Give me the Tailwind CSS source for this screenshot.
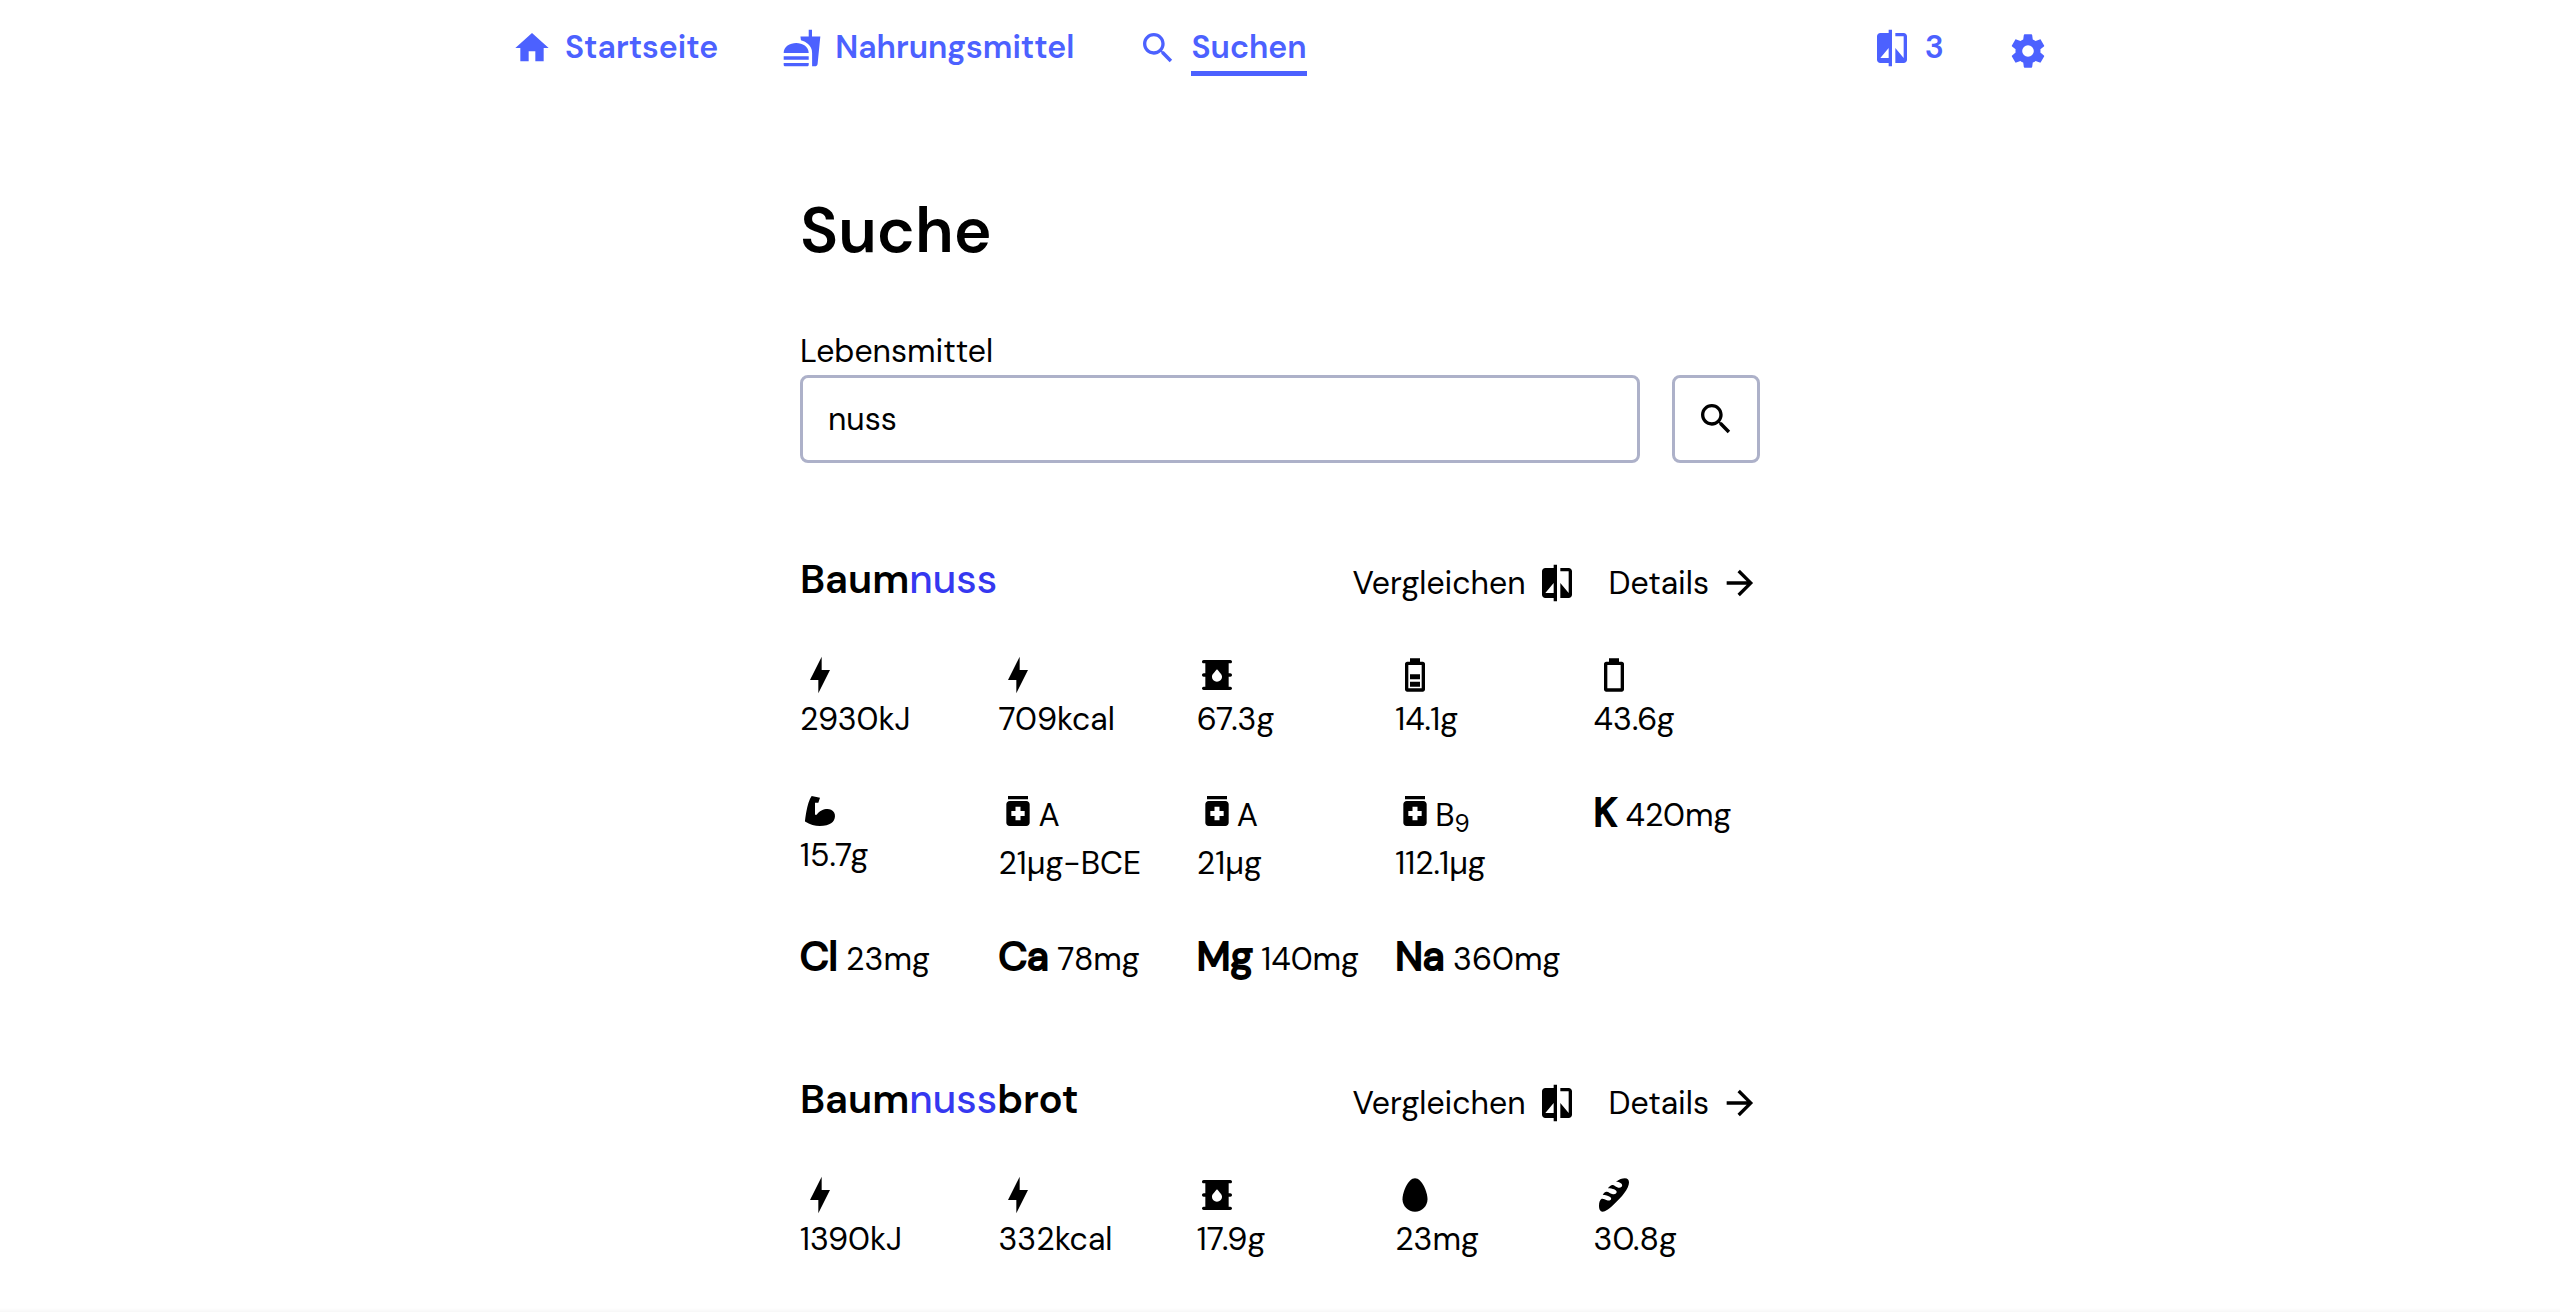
<!DOCTYPE html>
<html lang="de">
<head>
<meta charset="utf-8">
<meta name="viewport" content="width=device-width, initial-scale=1">
<title>Suche</title>
<script src="https://cdn.jsdelivr.net/npm/@tailwindcss/browser@4"></script>
</head>
<body class="min-h-screen bg-white font-['DM_Sans',sans-serif] text-[32px] leading-12 text-black">

<!-- Icon set -->
<svg class="hidden" aria-hidden="true">
  <symbol id="home" viewBox="0 0 24 24"><path d="M10 20V14H14V20H19V12H22L12 3 2 12H5V20Z"/></symbol>
  <symbol id="food" viewBox="0 0 24 24"><path d="M18.06 22.99h1.66c.84 0 1.53-.64 1.63-1.46L23 5.05h-5V1h-1.97v4.05h-4.97l.3 2.34c1.71.47 3.31 1.32 4.27 2.26 1.44 1.42 2.43 2.89 2.43 5.29v8.05zM1 21.99V21h15.03v.99c0 .55-.45 1-1.01 1H2.01c-.56 0-1.01-.45-1.01-1zm15.03-7c0-8-15.03-8-15.03 0h15.03zM1.02 17h15v2h-15z"/></symbol>
  <symbol id="search" viewBox="0 0 24 24"><path d="M15.5 14h-.79l-.28-.27C15.41 12.59 16 11.11 16 9.5 16 5.91 13.09 3 9.5 3S3 5.91 3 9.5 5.91 16 9.5 16c1.61 0 3.09-.59 4.23-1.57l.27.28v.79l5 4.99L20.49 19l-4.99-5zm-6 0C7.01 14 5 11.99 5 9.5S7.01 5 9.5 5 14 7.01 14 9.5 11.99 14 9.5 14z"/></symbol>
  <symbol id="compare" viewBox="0 0 24 24"><path d="M10 3H5c-1.1 0-2 .9-2 2v14c0 1.1.9 2 2 2h5v2h2V1h-2v2zm0 15H5l5-6v6zm9-15h-5v2h5v13l-5-6v9h5c1.1 0 2-.9 2-2V5c0-1.1-.9-2-2-2z"/></symbol>
  <symbol id="cog" viewBox="0 0 24 24"><path d="M12,15.5A3.5,3.5 0 0,1 8.5,12A3.5,3.5 0 0,1 12,8.5A3.5,3.5 0 0,1 15.5,12A3.5,3.5 0 0,1 12,15.5M19.43,12.97C19.47,12.65 19.5,12.33 19.5,12C19.5,11.67 19.47,11.34 19.43,11L21.54,9.37C21.73,9.22 21.78,8.95 21.66,8.73L19.66,5.27C19.54,5.05 19.27,4.96 19.05,5.05L16.56,6.05C16.04,5.66 15.5,5.32 14.87,5.07L14.5,2.42C14.46,2.18 14.25,2 14,2H10C9.75,2 9.54,2.18 9.5,2.42L9.13,5.07C8.5,5.32 7.96,5.66 7.44,6.05L4.95,5.05C4.73,4.96 4.46,5.05 4.34,5.27L2.34,8.73C2.21,8.95 2.27,9.22 2.46,9.37L4.57,11C4.53,11.34 4.5,11.67 4.5,12C4.5,12.33 4.53,12.65 4.57,12.97L2.46,14.63C2.27,14.78 2.21,15.05 2.34,15.27L4.34,18.73C4.46,18.95 4.73,19.03 4.95,18.95L7.44,17.94C7.96,18.34 8.5,18.68 9.13,18.93L9.5,21.58C9.54,21.82 9.75,22 10,22H14C14.25,22 14.46,21.82 14.5,21.58L14.87,18.93C15.5,18.67 16.04,18.34 16.56,17.94L19.05,18.95C19.27,19.03 19.54,18.95 19.66,18.73L21.66,15.27C21.78,15.05 21.73,14.78 21.54,14.63L19.43,12.97Z"/></symbol>
  <symbol id="arrow" viewBox="0 0 24 24"><path d="M4 11V13H16L10.5 18.5 11.92 19.92 19.84 12 11.92 4.08 10.5 5.5 16 11Z"/></symbol>
  <symbol id="flash" viewBox="0 0 24 24"><path d="M11 15H6L13 1V9H18L11 23Z"/></symbol>
  <symbol id="barrel" viewBox="0 0 24 24"><path d="M20 13C20.55 13 21 12.55 21 12S20.55 11 20 11H19V5H20C20.55 5 21 4.55 21 4S20.55 3 20 3H4C3.45 3 3 3.45 3 4S3.45 5 4 5H5V11H4C3.45 11 3 11.45 3 12S3.45 13 4 13H5V19H4C3.45 19 3 19.45 3 20S3.45 21 4 21H20C20.55 21 21 20.55 21 20S20.55 19 20 19H19V13H20M12 16C10.34 16 9 14.68 9 13.05C9 11.75 9.5 11.38 12 8.5C14.47 11.36 15 11.74 15 13.05C15 14.68 13.66 16 12 16Z"/></symbol>
  <symbol id="battery-half" viewBox="0 0 24 24"><path d="M16 20H8V6H16M16.67 4H15V2H9V4H7.33C6.6 4 6 4.6 6 5.33V20.67C6 21.4 6.6 22 7.33 22H16.67C17.41 22 18 21.41 18 20.67V5.33C18 4.6 17.4 4 16.67 4M15 16H9V19H15V16M15 11.5H9V14.5H15V11.5"/></symbol>
  <symbol id="battery" viewBox="0 0 24 24"><path d="M16 20H8V6H16M16.67 4H15V2H9V4H7.33C6.6 4 6 4.6 6 5.33V20.67C6 21.4 6.6 22 7.33 22H16.67C17.41 22 18 21.41 18 20.67V5.33C18 4.6 17.4 4 16.67 4"/></symbol>
  <symbol id="arm" viewBox="0 0 24 24"><path d="M3 18.34C3 18.34 4 7.09 7 3L12 4L11 7.09H9V14.25H10C12 11.18 16.14 10.06 18.64 11.18C21.94 12.71 21.64 17.32 18.64 19.36C16.24 21 9 22.43 3 18.34Z"/></symbol>
  <symbol id="vitamin" viewBox="0 0 24 24"><path d="M6 3h12v2H6zm11 3H7c-1.1 0-2 .9-2 2v11c0 1.1.9 2 2 2h10c1.1 0 2-.9 2-2V8c0-1.1-.9-2-2-2zm-1 9h-2.5v2.5h-3V15H8v-3h2.5V9.5h3V12H16v3z"/></symbol>
  <symbol id="egg" viewBox="0 0 24 24"><path d="M19.5 14.5C19.5 18.64 16.14 22 12 22S4.5 18.64 4.5 14.5 7.86 2 12 2 19.5 10.36 19.5 14.5"/></symbol>
  <symbol id="baguette" viewBox="0 0 24 24"><path d="M3 18.5C3 16.5 3.6 14.8 4.6 14.3C5.6 14 6.5 14.8 7.8 15.2C9.2 15.6 10.3 15 10.3 14.2C10.3 13 8 12 5.2 11.8C6 10.7 6.7 10 7.4 10C8.8 9.9 9.8 11.3 11.4 11.5C12.8 11.7 13.6 11 13.6 10.2C13.6 9 11.3 8 8.3 8C9 7.2 10 6.2 10.8 6C12.2 5.8 13 7.3 14.6 7.6C16 7.8 16.9 7.2 16.9 6.2C16.9 5 15.5 4.1 13.2 4C15 2.7 17 2 18.5 2C20.3 2 21 3 21 4.5C21 8 16.5 13.5 12 17.5C9 20.3 6.8 22 5.2 22C3.6 22 3 20.5 3 18.5Z"/></symbol>
</svg>

<header class="mx-auto flex w-full max-w-[1536px] items-start justify-between pt-[23px] font-semibold text-[#4c61ff]">
  <nav class="flex gap-16">
    <a href="#" class="flex items-start gap-[13px]"><svg class="mt-[5px] size-10 fill-current"><use href="#home"/></svg><span>Startseite</span></a>
    <a href="#" class="flex items-start gap-[13px]"><svg class="mt-[5px] size-10 fill-current"><use href="#food"/></svg><span>Nahrungsmittel</span></a>
    <a href="#" aria-current="page" class="flex items-start gap-[13px]"><svg class="mt-[5px] size-10 fill-current"><use href="#search"/></svg><span class="border-b-[5px] border-current">Suchen</span></a>
  </nav>
  <div class="flex gap-16">
    <a href="#" class="flex items-start gap-[13px]"><svg class="mt-[5px] size-10 fill-current"><use href="#compare"/></svg><span>3</span></a>
    <button type="button" aria-label="Einstellungen" class="pt-[7px]"><svg class="size-10 fill-current"><use href="#cog"/></svg></button>
  </div>
</header>

<main class="mx-auto flex w-full max-w-[960px] flex-col pt-[115px]">
  <h1 class="text-[64px] leading-20 font-[650]">Suche</h1>

  <form class="mt-14 flex items-end gap-8">
    <div class="flex grow flex-col">
      <label for="q">Lebensmittel</label>
      <input id="q" type="text" value="nuss" class="h-22 w-full rounded-lg border-3 border-[#adb1c9] px-[25px] outline-none">
    </div>
    <button type="submit" aria-label="Suchen" class="flex size-22 items-center justify-center rounded-lg border-3 border-[#adb1c9]"><svg class="size-10 fill-current"><use href="#search"/></svg></button>
  </form>

  <section class="mt-22">
    <div class="flex items-end justify-between">
      <h2 class="text-[40px] leading-14 font-[650]">Baum<mark class="bg-transparent font-medium text-[#3538f0]">nuss</mark></h2>
      <div class="flex gap-8">
        <button type="button" class="flex items-center gap-[11px]">Vergleichen<svg class="size-10 fill-current"><use href="#compare"/></svg></button>
        <a href="#" class="flex items-center gap-[11px]">Details<svg class="size-10 fill-current"><use href="#arrow"/></svg></a>
      </div>
    </div>
    <ul class="mt-12 grid grid-cols-5 gap-x-8 gap-y-12 whitespace-nowrap">
      <li><svg class="size-10"><use href="#flash"/></svg>2930kJ</li>
      <li><svg class="size-10"><use href="#flash"/></svg>709kcal</li>
      <li><svg class="size-10"><use href="#barrel"/></svg>67.3g</li>
      <li><svg class="size-10"><use href="#battery-half"/></svg>14.1g</li>
      <li><svg class="size-10"><use href="#battery"/></svg>43.6g</li>
      <li><svg class="size-10"><use href="#arm"/></svg>15.7g</li>
      <li><div class="flex"><svg class="size-10"><use href="#vitamin"/></svg><span>A</span></div>21µg-BCE</li>
      <li><div class="flex"><svg class="size-10"><use href="#vitamin"/></svg><span>A</span></div>21µg</li>
      <li><div class="flex"><svg class="size-10"><use href="#vitamin"/></svg><span>B<sub>9</sub></span></div>112.1µg</li>
      <li><b class="text-[40px] leading-none font-normal [-webkit-text-stroke:2px]">K</b> 420mg</li>
      <li><b class="text-[40px] leading-none font-normal [-webkit-text-stroke:2px]">Cl</b> 23mg</li>
      <li><b class="text-[40px] leading-none font-normal [-webkit-text-stroke:2px]">Ca</b> 78mg</li>
      <li><b class="text-[40px] leading-none font-normal [-webkit-text-stroke:2px]">Mg</b> 140mg</li>
      <li><b class="text-[40px] leading-none font-normal [-webkit-text-stroke:2px]">Na</b> 360mg</li>
    </ul>
  </section>

  <section class="mt-22">
    <div class="flex items-end justify-between">
      <h2 class="text-[40px] leading-14 font-[650]">Baum<mark class="bg-transparent font-medium text-[#3538f0]">nuss</mark>brot</h2>
      <div class="flex gap-8">
        <button type="button" class="flex items-center gap-[11px]">Vergleichen<svg class="size-10 fill-current"><use href="#compare"/></svg></button>
        <a href="#" class="flex items-center gap-[11px]">Details<svg class="size-10 fill-current"><use href="#arrow"/></svg></a>
      </div>
    </div>
    <ul class="mt-12 grid grid-cols-5 gap-x-8 gap-y-12 whitespace-nowrap">
      <li><svg class="size-10"><use href="#flash"/></svg>1390kJ</li>
      <li><svg class="size-10"><use href="#flash"/></svg>332kcal</li>
      <li><svg class="size-10"><use href="#barrel"/></svg>17.9g</li>
      <li><svg class="size-10"><use href="#egg"/></svg>23mg</li>
      <li><svg class="size-10"><use href="#baguette"/></svg>30.8g</li>
    </ul>
  </section>
</main>

<!-- Soft shade along the lower window edge -->
<div class="pointer-events-none fixed inset-x-0 bottom-0 h-1 bg-linear-to-b from-transparent to-black/3"></div>
</body>
</html>
